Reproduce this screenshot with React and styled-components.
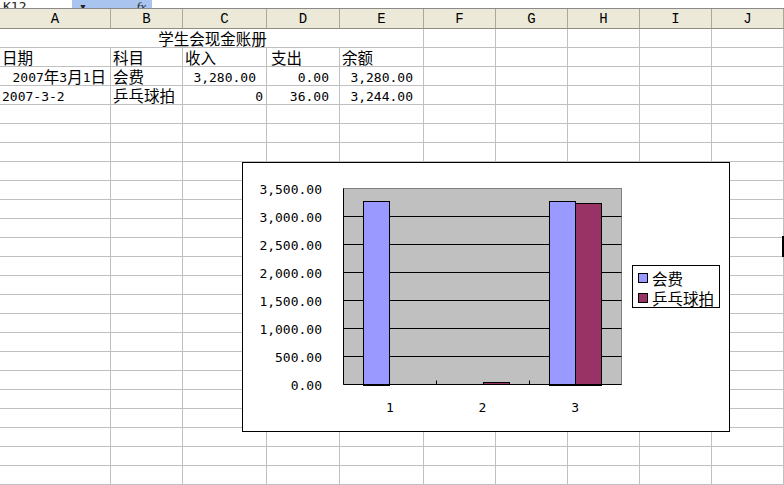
import styled, { createGlobalStyle } from "styled-components";

const GlobalStyle = createGlobalStyle`
  html, body {
    margin: 0;
    padding: 0;
    background: #ffffff;
    overflow: hidden;
  }
  #root {
    width: 784px;
    height: 485px;
    position: relative;
    overflow: hidden;
  }
`;

const COLS = [111, 72, 84, 73, 84, 72, 72, 72, 72, 72];
const LETTERS = ["A", "B", "C", "D", "E", "F", "G", "H", "I", "J"];
const ROW_COUNT = 24;

const Page = styled.div`
  width: 784px;
  height: 485px;
  display: flex;
  flex-direction: column;
  font-family: "DejaVu Sans Mono", "Noto Sans CJK SC", monospace;
  font-size: 13px;
  color: #000;
`;

const FormulaStrip = styled.div`
  height: 8px;
  display: flex;
  align-items: flex-end;
  overflow: hidden;
  border-bottom: 1px solid #8a8a8a;
`;

const NameBox = styled.div`
  width: 72px;
  height: 8px;
  background: #fff;
  display: flex;
  align-items: flex-end;
  padding-left: 3px;
  box-sizing: border-box;
`;

const FxBox = styled.div`
  width: 80px;
  height: 8px;
  background: #a9c4ef;
  display: flex;
  align-items: flex-end;
  justify-content: space-between;
  padding: 0 6px 0 7px;
  box-sizing: border-box;
`;

const Clipped = styled.span`
  line-height: 12px;
  margin-bottom: -5px;
  font-family: ${(p) => (p.$serif ? '"Liberation Serif", serif' : '"DejaVu Sans Mono", monospace')};
  font-style: ${(p) => (p.$serif ? "italic" : "normal")};
  font-size: 13px;
  color: #222;
`;

const Grid = styled.div`
  display: grid;
  grid-template-columns: ${COLS.map((c) => c + "px").join(" ")};
`;

const HeadCell = styled.div`
  height: 20px;
  box-sizing: border-box;
  background: #ece9d8;
  border-right: 1px solid #aca899;
  border-bottom: 1px solid #8f8c7f;
  display: flex;
  align-items: center;
  justify-content: center;
  font-family: "Liberation Mono", monospace;
  font-size: 14px;
  padding-top: 1px;
`;

const Cell = styled.div`
  height: 19px;
  box-sizing: border-box;
  border-right: 1px solid #c0c0c0;
  border-bottom: 1px solid #c0c0c0;
  display: flex;
  align-items: center;
  justify-content: ${(p) =>
    p.$align === "right" ? "flex-end" : p.$align === "center" ? "center" : "flex-start"};
  padding: 2px ${(p) => (p.$align === "right" ? p.$pad ?? 3 : 0)}px 0
    ${(p) => (p.$align === "right" ? 0 : p.$pad ?? 2)}px;
  grid-column: ${(p) => (p.$span ? `span ${p.$span}` : "auto")};
  white-space: nowrap;
  overflow: hidden;
`;

const Cjk = styled.span`
  font-family: "Noto Sans CJK SC", sans-serif;
  font-size: 15.5px;
  line-height: 1;
`;

const Latin = styled.span`
  line-height: 1;
`;

const Chart = styled.div`
  position: absolute;
  left: 242px;
  top: 162px;
  width: 488px;
  height: 270px;
  box-sizing: border-box;
  border: 1px solid #000;
  background: #fff;
`;

const Caret = styled.div`
  position: absolute;
  left: 782px;
  top: 236px;
  width: 2px;
  height: 21px;
  background: #000;
`;

// split text into CJK / latin runs so each gets its own font
function mix(text) {
  const parts = text.match(/[\u3000-\u9fff\uff00-\uffef]+|[^\u3000-\u9fff\uff00-\uffef]+/g) || [];
  return parts.map((p, i) =>
    /[\u3000-\u9fff]/.test(p) ? <Cjk key={i}>{p}</Cjk> : <Latin key={i}>{p}</Latin>
  );
}

const rows = [
  [{ text: "学生会现金账册", span: 5, align: "center" }],
  [{ text: "日期" }, { text: "科目" }, { text: "收入" }, { text: "支出", pad: 4 }, { text: "余额" }],
  [
    { text: "2007年3月1日", align: "right", pad: 4 },
    { text: "会费" },
    { text: "3,280.00", align: "right", pad: 10 },
    { text: "0.00", align: "right", pad: 10 },
    { text: "3,280.00", align: "right", pad: 10 },
  ],
  [
    { text: "2007-3-2" },
    { text: "乒乓球拍" },
    { text: "0", align: "right", pad: 3 },
    { text: "36.00", align: "right", pad: 10 },
    { text: "3,244.00", align: "right", pad: 10 },
  ],
];

function SheetRow({ cells }) {
  const used = cells.reduce((n, c) => n + (c.span || 1), 0);
  const filler = Array.from({ length: COLS.length - used });
  return (
    <>
      {cells.map((c, i) => (
        <Cell key={i} $span={c.span} $align={c.align} $pad={c.pad}>
          {mix(c.text)}
        </Cell>
      ))}
      {filler.map((_, i) => (
        <Cell key={"f" + i} />
      ))}
    </>
  );
}

const series = [
  { name: "会费", color: "#9999ff", values: [3280, 0, 3280] },
  { name: "乒乓球拍", color: "#993366", values: [0, 36, 3244] },
];

function BarChart() {
  const x0 = 100.5;
  const x1 = 378.5;
  const y0 = 25.5;
  const y1 = 221.5;
  const max = 3500;
  const catW = (x1 - x0) / 3;
  const barW = catW / 3.5;
  const ticks = [0, 500, 1000, 1500, 2000, 2500, 3000, 3500];
  const yOf = (v) => y1 - ((y1 - y0) * v) / max;
  const fmt = (v) =>
    v.toLocaleString("en-US", { minimumFractionDigits: 2, maximumFractionDigits: 2 });

  return (
    <svg width="486" height="268" viewBox="0 0 486 268">
      <rect x={x0} y={y0} width={x1 - x0} height={y1 - y0} fill="#c0c0c0" stroke="#808080" />
      {ticks.slice(1, -1).map((t) => (
        <line key={t} x1={x0} x2={x1} y1={yOf(t)} y2={yOf(t)} stroke="#000" />
      ))}
      {[0, 1, 2].map((ci) =>
        series.map((s, si) => {
          const v = s.values[ci];
          if (!v) return null;
          const bx = x0 + ci * catW + barW * 0.75 + si * barW;
          return (
            <rect
              key={ci + "-" + si}
              x={Math.round(bx) + 0.5}
              y={Math.round(yOf(v)) + 0.5}
              width={Math.round(barW)}
              height={Math.round(y1 - yOf(v))}
              fill={s.color}
              stroke="#000"
            />
          );
        })
      )}
      <line x1={x0} x2={x0} y1={y0} y2={y1} stroke="#000" />
      <line x1={x0} x2={x1} y1={y1} y2={y1} stroke="#000" />
      {[1, 2].map((i) => (
        <line
          key={i}
          x1={Math.round(x0 + i * catW) + 0.5}
          x2={Math.round(x0 + i * catW) + 0.5}
          y1={y1}
          y2={y1 - 4}
          stroke="#000"
        />
      ))}
      {ticks.map((t) => (
        <text
          key={t}
          x={79}
          y={yOf(t) + 1}
          textAnchor="end"
          dominantBaseline="central"
          fontFamily='"DejaVu Sans Mono", monospace'
          fontSize="13"
        >
          {fmt(t)}
        </text>
      ))}
      {[0, 1, 2].map((ci) => (
        <text
          key={ci}
          x={x0 + ci * catW + catW / 2}
          y={244}
          textAnchor="middle"
          dominantBaseline="central"
          fontFamily='"DejaVu Sans Mono", monospace'
          fontSize="13"
        >
          {ci + 1}
        </text>
      ))}
      <rect x={389.5} y={102.5} width={87} height={42} fill="#fff" stroke="#000" />
      {series.map((s, i) => (
        <g key={s.name}>
          <rect x={395.5} y={110.5 + i * 20} width={9} height={9} fill={s.color} stroke="#000" />
          <text
            x={409}
            y={115 + i * 20}
            dominantBaseline="central"
            fontFamily='"Noto Sans CJK SC", sans-serif'
            fontSize="15.5"
          >
            {s.name}
          </text>
        </g>
      ))}
    </svg>
  );
}

export default function App() {
  return (
    <>
      <GlobalStyle />
      <Page>
        <FormulaStrip>
          <NameBox>
            <Clipped>K12</Clipped>
          </NameBox>
          <FxBox>
            <Clipped>▾</Clipped>
            <Clipped $serif>fx</Clipped>
          </FxBox>
        </FormulaStrip>
        <Grid>
          {LETTERS.map((l) => (
            <HeadCell key={l}>{l}</HeadCell>
          ))}
          {rows.map((r, i) => (
            <SheetRow key={i} cells={r} />
          ))}
          {Array.from({ length: ROW_COUNT - rows.length }).map((_, i) => (
            <SheetRow key={"e" + i} cells={[]} />
          ))}
        </Grid>
      </Page>
      <Chart>
        <BarChart />
      </Chart>
      <Caret />
    </>
  );
}
